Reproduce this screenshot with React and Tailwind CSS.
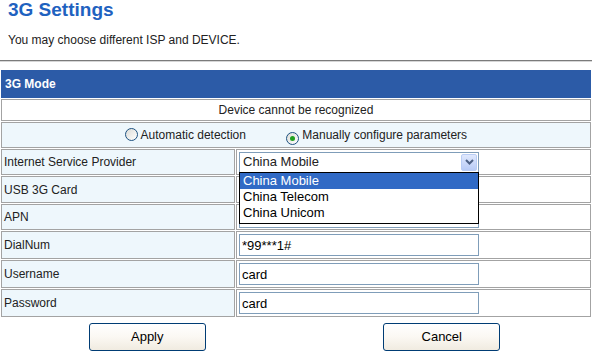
import { useState } from 'react'

const rowLabel = 'border border-[#a3a3a3] bg-[#eef7fc] pl-[2px] text-left align-middle'
const rowValue = 'border border-[#a3a3a3] bg-white pl-[2px] text-left align-middle'

function TextBox({ value, className = '' }) {
	return (
		<input
			readOnly
			value={value}
			className={`h-[22px] w-[240px] border border-[#7f9db9] bg-white px-[2px] text-[13px] text-black outline-none ${className}`}
		/>
	)
}

function FakeSelect({ value }) {
	return (
		<div className="flex h-[21px] w-[240px] items-center justify-between border border-[#7f9db9] bg-white pl-[3px] pr-[1px] text-[13px]">
			<span>{value}</span>
			<span className="flex h-[17px] w-[16px] items-center justify-center rounded-[2px] border border-[#b9cdf5] bg-gradient-to-b from-[#dfe8fd] to-[#b8cbf6]">
				<svg width="9" height="6" viewBox="0 0 9 6">
					<path d="M1 1 L4.5 4.5 L8 1" fill="none" stroke="#4d6185" strokeWidth="2" />
				</svg>
			</span>
		</div>
	)
}

function Radio({ checked }) {
	return (
		<span className="inline-flex h-[13px] w-[13px] items-center justify-center rounded-full border border-[#1c5180] bg-gradient-to-br from-[#dcdcd7] to-white align-[-2px]">
			{checked && <span className="h-[5px] w-[5px] rounded-full bg-[#21a121]" />}
		</span>
	)
}

function XpButton({ children }) {
	return (
		<button className="h-[28px] w-[117px] rounded-[3px] border border-[#003c74] bg-gradient-to-b from-white via-[#fbf8f3] to-[#f0ebe0] text-[13px] text-black">
			{children}
		</button>
	)
}

export default function App() {
	const [mode] = useState('manual')
	const options = ['China Mobile', 'China Telecom', 'China Unicom']

	return (
		<div className="relative h-[359px] w-[596px] overflow-hidden bg-white font-['Liberation_Sans',Arial,sans-serif] text-[12px] text-[#222]">
			<h1 className="pl-2 text-[19px] font-bold leading-[20px] text-[#1f62c0]">3G Settings</h1>
			<p className="mt-[13px] pl-2 leading-[14px]">You may choose different ISP and DEVICE.</p>
			<div className="mt-[13px] h-[2px] w-[592px] border-t border-[#7b7b7b] border-b-[#d6d6d6] border-b" />

			<table className="mt-[7px] w-[592px] border-separate border-spacing-[1px]">
				<tbody>
					<tr className="h-[28px]">
						<td colSpan={2} className="bg-[#2c5ba7] pl-[4px] font-bold text-white">3G Mode</td>
					</tr>
					<tr className="h-[22px]">
						<td colSpan={2} className="border border-[#a3a3a3] bg-white text-center">Device cannot be recognized</td>
					</tr>
					<tr className="h-[26px]">
						<td colSpan={2} className="border border-[#a3a3a3] bg-[#eef7fc] text-center">
							<Radio checked={mode === 'auto'} /> Automatic detection
							<span className="ml-[40px]" />
							<Radio checked={mode === 'manual'} /> Manually configure parameters
						</td>
					</tr>
					<tr className="h-[26px]">
						<td className={`${rowLabel} w-[234px]`}>Internet Service Provider</td>
						<td className={rowValue}><FakeSelect value="China Mobile" /></td>
					</tr>
					<tr className="h-[27px]">
						<td className={rowLabel}>USB 3G Card</td>
						<td className={rowValue}><FakeSelect value="" /></td>
					</tr>
					<tr className="h-[26px]">
						<td className={rowLabel}>APN</td>
						<td className={rowValue}><TextBox value="" /></td>
					</tr>
					<tr className="h-[28px]">
						<td className={rowLabel}>DialNum</td>
						<td className={rowValue}><TextBox value="*99***1#" className="text-[12px]" /></td>
					</tr>
					<tr className="h-[28px]">
						<td className={rowLabel}>Username</td>
						<td className={rowValue}><TextBox value="card" /></td>
					</tr>
					<tr className="h-[28px]">
						<td className={rowLabel}>Password</td>
						<td className={rowValue}><TextBox value="card" /></td>
					</tr>
				</tbody>
			</table>

			<div className="mt-[5px] flex w-[589px]">
				<div className="flex w-1/2 justify-center"><XpButton>Apply</XpButton></div>
				<div className="flex w-1/2 justify-center"><XpButton>Cancel</XpButton></div>
			</div>

			{/* opened ISP dropdown list */}
			<ul className="absolute left-[239px] top-[172px] w-[240px] border border-black bg-white pb-[2px] text-[13px] leading-[16px]">
				{options.map((o, i) => (
					<li key={o} className={i === 0 ? 'bg-[#316ac5] pl-[3px] text-white' : 'pl-[3px] text-black'}>{o}</li>
				))}
			</ul>
		</div>
	)
}
